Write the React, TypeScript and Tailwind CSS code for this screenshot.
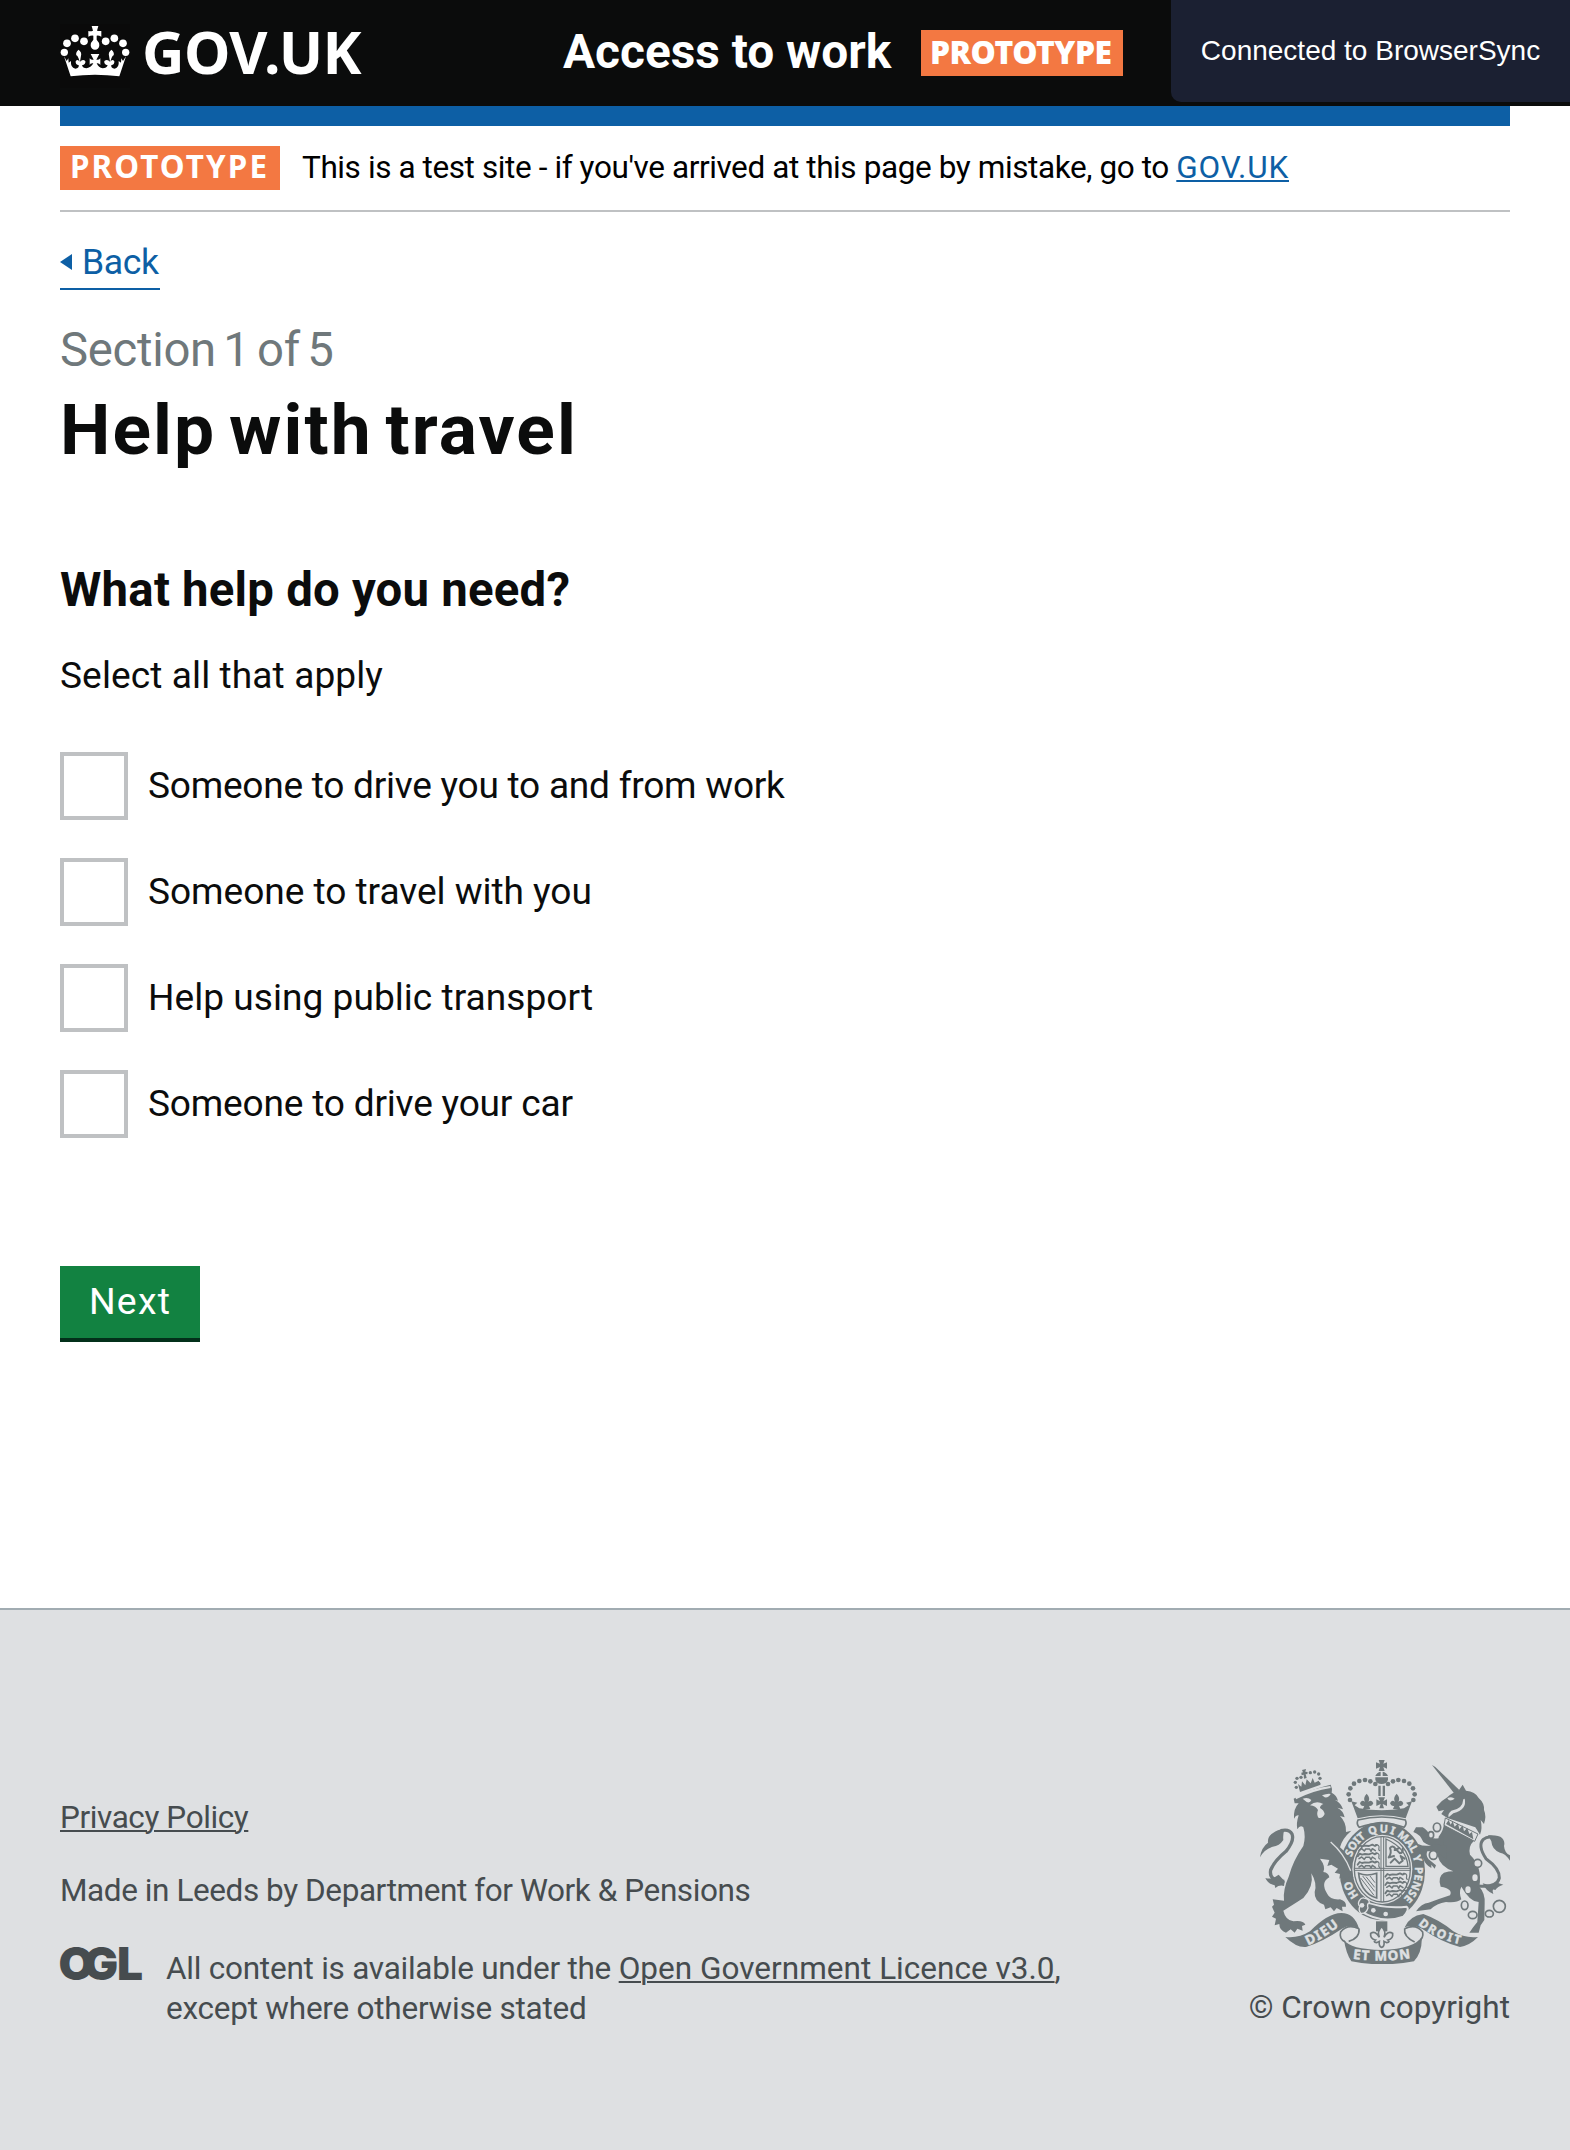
import React from 'react';

const INK = '#6f787b';
const PAPER = '#dee0e2';

/** White crown of the masthead. */
function Crown() {
  const beads = [
    [43, 112, 11], [51, 85, 11.5], [75, 70, 11.5], [102, 79, 11.5],
    [227, 112, 11], [219, 85, 11.5], [193, 70, 11.5], [167, 79, 11.5],
  ];
  return (
    <svg className="mt-[24px] h-[64px] w-[70px] shrink-0 bg-[#0a0a0a]" viewBox="30 27 210 192" fill="#fff">
      {beads.map(([x, y, r]) => (
        <circle key={`${x}-${y}`} cx={x} cy={y} r={r} />
      ))}
      <path d="M125 33H145L141 47Q149 49 154 48V65Q146 61 140 62L140 74Q148 82 148 91A13 13 0 0 1 122 91Q122 82 130 74L130 62Q123 61 115 65V48Q122 50 129 47Z" />
      <path d="M62 184L42 124L50 138L55 130L56 143L63 138Q61 158 76 161Q88 160 86 150Q76 150 77 139Q83 131 89 140Q84 122 79 121Q76 112 86 104Q96 112 93 122L90 140Q98 131 106 138Q108 148 96 151Q98 160 110 160Q124 157 130 145Q120 144 119 150V130Q124 136 131 134L122 117H148L139 134Q146 136 151 130V150Q148 144 140 145Q146 158 158 160Q170 160 173 151Q161 148 163 138Q172 131 180 140L177 122Q174 112 184 104Q194 112 191 121Q186 122 181 140Q187 131 193 139Q194 150 184 150Q182 160 194 161Q208 158 206 138L213 143L214 130L219 138L228 124L208 184Q135 175 62 184Z" />
    </svg>
  );
}

/** Three stacked passant lions of a shield quarter. */
function Beasts({ x, y }: { x: number; y: number }) {
  return (
    <g fill="none" stroke={INK} strokeWidth="5.5" strokeLinecap="round" strokeLinejoin="round">
      {[0, 25, 50].map((d) => (
        <g key={d}>
          <path d={`M${x} ${y + d + 6}l6 -8l7 3l9 -2l12 1l10 -4l8 4l5 -3`} />
          <path d={`M${x + 4} ${y + d + 13}l8 -5l8 7l4 -6l12 0l4 7l4 -8l9 6`} strokeWidth="4.5" />
          <path d={`M${x + 54} ${y + d - 4}q12 1 10 9t2 9`} strokeWidth="3.5" />
        </g>
      ))}
    </g>
  );
}

/** Royal coat of arms in the footer. */
function RoyalArms() {
  const archBeads = [[330, 180], [326, 163], [331, 145], [342, 131], [358, 123], [375, 120], [391, 124], [406, 132]];
  const lionBeads = [
    [169, 142], [166, 127], [171, 115], [183, 112], [236, 130], [240, 115], [236, 102], [224, 96], [211, 98],
  ];
  return (
    <svg className="mt-[150px] h-[204px] w-[250px]" viewBox="60 60 750 612" fill={INK}>
      <defs>
        <path id="garter" d="M427 502A98 112 0 0 1 427 278A98 112 0 0 1 427 502" />
        <path id="scroll-left" d="M204 616Q258 592 308 550" />
        <path id="scroll-mid" d="M338 656Q425 668 516 654" />
        <path id="scroll-right" d="M534 553Q585 598 668 614" />
      </defs>

      {/* imperial crown */}
      {archBeads.map(([x, y]) => (
        <g key={x}>
          <circle cx={x} cy={y} r="7" />
          <circle cx={850 - x} cy={y} r="7" />
        </g>
      ))}
      <path d="M416 60H434L430 71L441 67V86L430 81L434 93H416L420 81L408 86V67L420 71Z" />
      <path d="M422 95V108H406Q410 97 422 95ZM428 95Q440 97 444 108H428Z" />
      <path d="M406 112H444V119Q440 132 425 132Q410 132 406 119Z" />
      <path d="M415 137H422V168H415ZM428 137H435V168H428Z" />
      <path d="M415 172H435L430 184L441 178V198L428 192L432 205H418L422 192L409 198V178L420 184Z" />
      <path d="M380 161Q392 174 385 185Q396 178 400 190Q396 200 387 197L391 207H369L373 197Q362 200 360 190Q364 178 375 185Q368 174 380 161Z" />
      <path d="M470 161Q482 174 475 185Q486 178 490 190Q488 200 477 197L481 207H459L463 197Q454 200 450 190Q454 178 465 185Q458 174 470 161Z" />
      <path d="M334 184L352 188L344 196L358 205Q425 217 492 205L506 196L498 188L516 184L497 235Q425 217 353 235Z" />
      <path d="M354 240Q425 222 496 240Q502 252 492 262Q425 238 358 262Q348 252 354 240Z" fill={PAPER} stroke={INK} strokeWidth="5" />

      {/* garter and shield */}
      <ellipse cx="427" cy="393" rx="128" ry="148" />
      <ellipse cx="427" cy="388" rx="90" ry="104" fill={PAPER} />
      <ellipse cx="427" cy="388" rx="84" ry="98" fill="none" stroke={INK} strokeWidth="4" />
      <path d="M423 290V486M431 290V486M343 385H511M343 391H511" stroke={INK} strokeWidth="3" fill="none" />
      <Beasts x={353} y={318} />
      <Beasts x={436} y={404} />
      <path d="M438 297V379H504Q500 325 438 297Z" fill="none" stroke={INK} strokeWidth="4" />
      <path d="M446 352q10 -14 4 -28q8 -10 16 2l14 14q10 -2 8 -14M452 368l12 -12l14 14l10 -8l-6 -14l12 8M464 330l14 -6M462 348l-14 4" fill="none" stroke={INK} strokeWidth="6" strokeLinecap="round" strokeLinejoin="round" />
      <path d="M356 400Q380 410 410 400V474Q386 468 370 444Q358 424 356 400Z" fill="none" stroke={INK} strokeWidth="5" />
      <path d="M368 408L404 454M378 410L404 442M390 408L405 428M362 414L402 466" stroke={INK} strokeWidth="3" />
      <g fill={PAPER} stroke={PAPER} strokeWidth="1.2" fontFamily="Noto Sans" fontWeight="700" fontSize="33">
        <text><textPath href="#garter" startOffset="82">HO</textPath></text>
        <text><textPath href="#garter" startOffset="204" textLength="74">SOIT</textPath></text>
        <text><textPath href="#garter" startOffset="290" textLength="74">QUI</textPath></text>
        <text><textPath href="#garter" startOffset="374" textLength="70">MAL</textPath></text>
        <text><textPath href="#garter" startOffset="452">Y</textPath></text>
        <text><textPath href="#garter" startOffset="486" textLength="104">PENSE</textPath></text>
      </g>
      {/* belt and buckle */}
      <path d="M366 482Q430 508 500 500Q510 508 490 530Q425 554 360 512Z" stroke={PAPER} strokeWidth="6" />
      <path d="M372 474Q388 476 388 488Q380 492 384 504Q378 522 362 520Q354 508 360 500Q352 492 358 482Q364 472 372 474Z" stroke={PAPER} strokeWidth="4" />
      <circle cx="366" cy="496" r="7" fill={PAPER} />
      <circle cx="400" cy="511" r="7" fill={PAPER} />
      <circle cx="437" cy="522" r="7" fill={PAPER} />

      {/* lion */}
      {lionBeads.map(([x, y]) => (
        <circle key={`${x}-${y}`} cx={x} cy={y} r="5" />
      ))}
      <path d="M186 90L198 87L196 95L203 96L202 103L197 102L200 114L192 116L191 104L185 106L184 98L189 97Z" />
      <path d="M174 132L184 140L186 124L196 136L200 118L212 130L218 114L224 128L236 122L242 134L180 156Z" />
      <path d="M161 176Q210 148 272 134Q278 146 275 158Q290 166 294 182L285 180Q304 190 309 208L292 203Q310 212 314 232L300 228Q320 248 318 276L334 272Q306 296 300 322Q326 342 334 380L340 414L328 410L318 420L310 408L298 416L300 402L284 398L294 386L274 374L262 378L268 360L240 356Q258 380 250 396Q266 398 268 412Q240 428 262 462Q270 480 300 478Q320 484 318 500L306 500L308 514L290 504L282 514L272 502L256 508L252 494Q222 484 224 456Q232 430 214 400Q222 440 190 474Q150 500 130 512Q136 540 160 544Q190 540 196 554L186 558L188 572L172 566L164 578L152 568L138 578Q118 572 118 552L104 556L108 536L96 530L104 518L96 500L102 494L98 478L132 482Q128 450 146 410Q160 360 190 318Q198 290 190 262Q180 254 172 268Q168 250 176 226Q168 224 162 236Q160 206 176 190L164 190Z" />
      <path d="M166 170Q215 145 271 138L272 144Q218 152 168 178Z" fill={PAPER} />
      <path d="M188 176Q204 170 214 180Q210 190 200 186ZM246 166Q262 160 272 162Q266 174 254 172Z" fill={PAPER} />
      <path d="M210 196Q228 180 250 192Q240 196 240 204Q252 210 254 222Q248 236 236 234Q228 224 234 210Q228 198 210 196Z" fill={PAPER} />
      <path d="M272 306Q312 340 332 392" stroke={PAPER} strokeWidth="4" fill="none" />
      <path d="M133 424Q86 424 92 390Q104 362 138 334Q164 302 156 282Q148 266 122 272" fill="none" stroke={INK} strokeWidth="10" />
      <path d="M60 352Q64 322 84 308Q82 290 98 280Q116 266 134 268Q128 282 130 300Q118 318 98 320Q72 328 60 352Z" />
      <path d="M76 414Q96 420 116 404L134 424L132 438Q118 434 106 444L104 436Q84 432 76 414Z" />

      {/* unicorn */}
      <path d="M576 75L586 81L658 150L644 162Z" />
      <path d="M657 150L668 134L678 152Q706 154 716 174Q734 190 732 210Q740 228 732 252L722 240Q728 266 720 284L706 262L622 234L604 222L612 210L596 214L589 200Q604 182 622 172Q634 160 657 150Z" />
      <path d="M622 174Q636 168 644 176Q634 184 626 180Z" fill={PAPER} />
      <path d="M674 176Q682 208 640 220L626 232Q622 222 634 212Q668 208 670 178Z" fill={PAPER} />
      <path d="M612 246L702 302Q684 318 690 344Q728 380 718 440Q736 460 734 490L733 540L722 556L716 578L688 578Q700 560 712 546L716 486Q690 486 664 440Q656 456 664 478Q650 490 618 486Q590 490 572 508L528 514Q544 490 566 488Q600 476 630 466Q640 446 602 440Q592 410 612 398Q626 394 640 394Q600 378 594 350Q590 330 596 290Q612 270 612 246Z" />
      <path d="M610 326Q570 322 550 306Q540 282 520 276L528 262L548 262Q562 268 572 292Q588 300 612 290Z" />
      <path d="M618 356Q588 330 562 334Q556 346 566 358L588 376L584 386L574 374L574 384Q556 374 550 356Q536 340 534 312Q556 322 580 314L620 316Z" />
      <path d="M616 234L714 282L704 304L612 256Z" fill={PAPER} stroke={INK} strokeWidth="3" />
      <path d="M618 252L626 240L632 254L638 244L644 260L654 250L658 268L668 256L672 274L682 264L688 282L696 276L700 298Z" />
      <path d="M714 438Q770 444 778 414Q780 386 738 356Q712 316 730 298Q742 288 758 292" fill="none" stroke={INK} strokeWidth="9" />
      <path d="M744 286Q776 284 786 294Q796 304 792 318Q794 340 810 346V362Q796 340 780 338Q756 330 754 304Z" />
      <path d="M728 430Q760 440 772 428L790 434Q772 440 766 450Q754 444 760 462Q738 454 728 430Z" />
      <g fill={PAPER} stroke={INK} strokeWidth="5">
        <ellipse cx="591" cy="262" rx="11" ry="13" />
        <ellipse cx="573" cy="285" rx="8" ry="10" />
        <ellipse cx="580" cy="345" rx="12" ry="13" />
        <ellipse cx="713" cy="370" rx="12" ry="12" />
        <ellipse cx="674" cy="496" rx="10" ry="13" />
        <ellipse cx="698" cy="525" rx="13" ry="11" />
        <ellipse cx="748" cy="521" rx="12" ry="10" />
        <circle cx="778" cy="499" r="18" />
      </g>
      <ellipse cx="705" cy="413" rx="8" ry="10" fill={PAPER} />
      <ellipse cx="684" cy="449" rx="8" ry="10" fill={PAPER} />

      {/* motto scroll */}
      <path d="M136 591Q175 596 210 574Q262 520 304 519Q344 520 357 566Q330 550 306 566Q250 604 198 621Q170 624 136 591Z" />
      <path d="M714 591Q675 596 640 574Q600 540 550 522Q508 528 494 562Q520 552 546 566Q600 604 660 621Q690 616 714 591Z" />
      <path d="M357 566Q322 550 302 576Q296 596 316 606M357 566Q360 594 326 604M494 566Q528 550 548 576Q552 596 534 606M494 566Q490 590 524 606" fill="none" stroke={INK} strokeWidth="5" />
      <path d="M312 600Q330 628 425 630Q525 626 545 590Q548 634 522 664Q425 682 334 664Q318 640 312 600Z" />
      <g fill={PAPER} stroke={PAPER} strokeWidth="1.5" fontFamily="Noto Sans" fontWeight="700" fontSize="40">
        <text><textPath href="#scroll-left" textLength="110">DIEU</textPath></text>
        <text><textPath href="#scroll-mid" textLength="174">ET MON</textPath></text>
        <text fontSize="36"><textPath href="#scroll-right" textLength="140">DROIT</textPath></text>
      </g>
      <path d="M408 544H442V574H408Z" />
      <path d="M425 560Q440 574 432 592Q444 570 458 580Q460 596 444 600Q452 606 440 608L432 604Q434 620 425 622Q416 620 418 604L410 608Q398 606 406 600Q390 596 392 580Q406 570 418 592Q410 574 425 560Z" fill={PAPER} stroke={INK} strokeWidth="5" />
    </svg>
  );
}

/** Open Government Licence mark. */
function OglMark() {
  return (
    <svg className="mt-[-8px] -ml-[4px] h-[44px] w-[90px]" viewBox="-4 -5 90 44" fill="#464c4f">
      <text x="-1.5 23.5 57" y="34" fontFamily="Inter" fontWeight="900" fontSize="46">OGL</text>
    </svg>
  );
}

const OPTIONS = [
  { label: 'Someone to drive you to and from work', spacing: 'tracking-[-0.26px]' },
  { label: 'Someone to travel with you', spacing: 'tracking-[-0.04px]' },
  { label: 'Help using public transport', spacing: 'tracking-[0.03px]' },
  { label: 'Someone to drive your car', spacing: 'tracking-[-0.2px]' },
];

const link = 'underline decoration-2 underline-offset-[2px]';

export default function App() {
  return (
    <div className="h-[2150px] w-[1570px] overflow-hidden bg-white font-['Roboto',sans-serif] whitespace-nowrap text-[#0b0c0c]">
      <header className="relative flex h-[106px] items-start bg-[#0b0c0c] pl-[60px] font-bold text-white">
        <a className="flex w-[503px] items-start">
          <Crown />
          <span className="mt-[21px] ml-[12px] font-['Noto_Sans'] text-[58.8px] leading-[60px] tracking-[-0.62px]">GOV.UK</span>
        </a>
        <span className="mt-[27px] w-[358px] text-[47.8px] leading-[50px]">Access to work</span>
        <strong className="mt-[30px] h-[46px] w-[202px] bg-[#f37842] pl-[9px] font-['Noto_Sans'] text-[31.8px] leading-[43px] tracking-[-0.5px]">PROTOTYPE</strong>
        <div className="absolute top-0 right-0 h-[102px] w-[399px] rounded-bl-[10px] bg-[#1b2032] text-center font-['Liberation_Sans'] text-[28px] leading-[101px] font-normal">
          Connected to BrowserSync
        </div>
      </header>

      <div className="mx-[60px] h-[20px] bg-[#0d5fa5]" />

      <div className="mx-[60px] flex h-[86px] items-start border-b-2 border-[#bfc1c3] text-black">
        <strong className="mt-[20px] h-[44px] w-[220px] bg-[#f37842] pl-[10px] font-['Noto_Sans'] text-[31.4px] leading-[40px] tracking-[2.1px] text-white">PROTOTYPE</strong>
        <p className="mt-[22px] ml-[22px] text-[31.5px] leading-[40px] tracking-[-0.4px]">
          This is a test site - if you've arrived at this page by mistake, go to{' '}
          <a className={`${link} tracking-[0.8px] text-[#0d5fa5]`}>GOV.UK</a>
        </p>
      </div>

      <main className="flex flex-col items-start px-[60px]">
        <a className="mt-[30px] flex h-[48px] w-[100px] items-start gap-[10px] border-b-2 border-[#0d5fa5] text-[35.6px] leading-[40px] tracking-[-0.4px] text-[#0d5fa5]">
          <svg className="mt-[12px] h-[16px] w-[12px] shrink-0" viewBox="0 0 12 16" fill="#0d5fa5">
            <path d="M0 8L12 0V16Z" />
          </svg>
          Back
        </a>
        <p className="mt-[35px] text-[47.3px] leading-[50px] tracking-[-0.3px] [word-spacing:-4px] text-[#6f787b]">Section 1 of 5</p>
        <h1 className="mt-[15px] text-[71.3px] leading-[80px] font-bold tracking-[2.1px] [word-spacing:-7px]">Help with travel</h1>
        <h2 className="mt-[95px] text-[47.3px] leading-[50px] font-bold tracking-[0.23px]">What help do you need?</h2>
        <p className="mt-[41px] text-[37.1px] leading-[40px] tracking-[0.1px]">Select all that apply</p>

        <ul className="mt-[56px] flex flex-col gap-[38px]">
          {OPTIONS.map((o) => (
            <li key={o.label} className="flex h-[68px] gap-[20px]">
              <span className="size-[68px] border-4 border-[#bfc1c3]" />
              <span className={`text-[37.1px] leading-[67px] ${o.spacing}`}>{o.label}</span>
            </li>
          ))}
        </ul>

        <button className="mt-[128px] flex h-[76px] w-[140px] items-start border-b-4 border-[#03301a] bg-[#128241] pl-[29px] text-[37.4px] leading-[70px] tracking-[1.2px] text-white">
          Next
        </button>
      </main>

      <footer className="mt-[266px] flex h-[542px] items-start justify-between border-t-2 border-[#a1acb2] bg-[#dee0e2] px-[60px] text-[31.5px] leading-[40px] text-[#464c4f]">
        <div className="pt-[188px]">
          <p>
            <a className={`${link} tracking-[-0.4px]`}>Privacy Policy</a>
          </p>
          <p className="mt-[33px] tracking-[-0.42px]">Made in Leeds by Department for Work &amp; Pensions</p>
          <div className="mt-[38px] flex items-start gap-[20px]">
            <OglMark />
            <p className="tracking-[-0.24px]">
              All content is available under the <a className={`${link} tracking-[0.02px]`}>Open Government Licence v3.0</a>,
              <br />
              except where otherwise stated
            </p>
          </div>
        </div>
        <div className="flex flex-col items-end">
          <RoyalArms />
          <a className="mt-[24px] tracking-[0.03px]">© Crown copyright</a>
        </div>
      </footer>
    </div>
  );
}
